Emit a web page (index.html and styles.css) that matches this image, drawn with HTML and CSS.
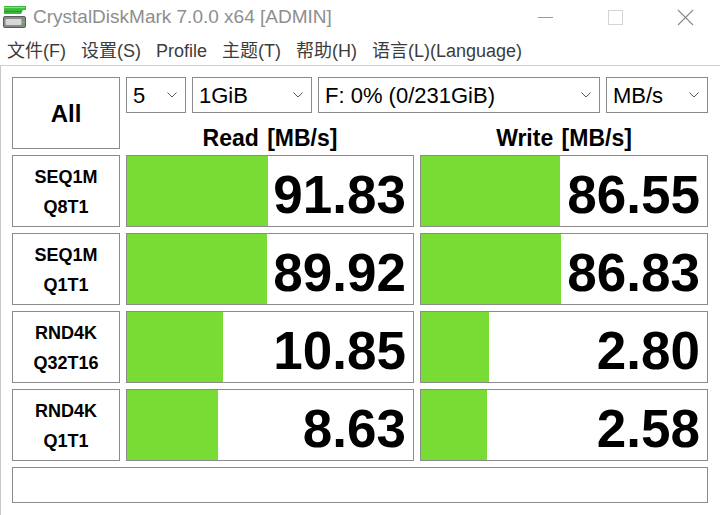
FILE: index.html
```html
<!DOCTYPE html>
<html lang="zh-CN">
<head>
<meta charset="utf-8">
<title>CrystalDiskMark 7.0.0 x64 [ADMIN]</title>
<link rel="stylesheet" href="styles.css">
</head>
<body>
<div class="window">
  <div class="titlebar">
    <svg class="app-icon" width="24" height="24" viewBox="0 0 24 24">
      <path d="M1 1 H23 V5 H20 L18 9 H1 Z" fill="#3cb83c"/>
      <rect x="1" y="2" width="21" height="1.2" fill="#7fe07f"/>
      <rect x="1" y="6" width="17" height="1" fill="#259a25"/>
      <rect x="0.5" y="11.5" width="22" height="11" rx="1.5" fill="#8a8a8a" stroke="#5a5a5a"/>
      <rect x="2.5" y="14" width="16" height="6" rx="1" fill="#d8d8d8"/>
      <rect x="19.5" y="16" width="2" height="2" fill="#4cd04c"/>
    </svg>
    <span class="title">CrystalDiskMark 7.0.0 x64 [ADMIN]</span>
    <div class="controls">
      <svg class="ctl" width="46" height="32" viewBox="0 0 46 32"><line x1="16" y1="16.5" x2="31" y2="16.5" stroke="#9a9a9a" stroke-width="1"/></svg>
      <svg class="ctl" width="46" height="32" viewBox="0 0 46 32"><rect x="16.5" y="9.5" width="14" height="14" fill="none" stroke="#d4d4d4" stroke-width="1"/></svg>
      <svg class="ctl" width="46" height="32" viewBox="0 0 46 32"><path d="M16 9 L31 24 M31 9 L16 24" stroke="#8a8a8a" stroke-width="1.1"/></svg>
    </div>
  </div>
  <div class="menubar">
    <span class="menu-item">文件(F)</span>
    <span class="menu-item">设置(S)</span>
    <span class="menu-item">Profile</span>
    <span class="menu-item">主题(T)</span>
    <span class="menu-item">帮助(H)</span>
    <span class="menu-item">语言(L)(Language)</span>
  </div>
  <div class="main">
    <div class="grid">
      <div class="all-btn">All</div>
      <div class="selects">
        <div class="select s-count"><span>5</span><svg class="chev" width="10" height="6" viewBox="0 0 10 6"><polyline points="0.5,0.5 5,5 9.5,0.5" fill="none" stroke="#555" stroke-width="1"/></svg></div>
        <div class="select s-size"><span>1GiB</span><svg class="chev" width="10" height="6" viewBox="0 0 10 6"><polyline points="0.5,0.5 5,5 9.5,0.5" fill="none" stroke="#555" stroke-width="1"/></svg></div>
        <div class="select s-drive"><span>F: 0% (0/231GiB)</span><svg class="chev" width="10" height="6" viewBox="0 0 10 6"><polyline points="0.5,0.5 5,5 9.5,0.5" fill="none" stroke="#555" stroke-width="1"/></svg></div>
        <div class="select s-unit"><span>MB/s</span><svg class="chev" width="10" height="6" viewBox="0 0 10 6"><polyline points="0.5,0.5 5,5 9.5,0.5" fill="none" stroke="#555" stroke-width="1"/></svg></div>
      </div>
      <div class="col-head">Read [MB/s]</div>
      <div class="col-head">Write [MB/s]</div>

      <div class="label">SEQ1M<br>Q8T1</div>
      <div class="value"><div class="bar" style="width:141px"></div><span class="num">91.83</span></div>
      <div class="value"><div class="bar" style="width:139px"></div><span class="num">86.55</span></div>

      <div class="label">SEQ1M<br>Q1T1</div>
      <div class="value"><div class="bar" style="width:140px"></div><span class="num">89.92</span></div>
      <div class="value"><div class="bar" style="width:140px"></div><span class="num">86.83</span></div>

      <div class="label">RND4K<br>Q32T16</div>
      <div class="value"><div class="bar" style="width:96px"></div><span class="num">10.85</span></div>
      <div class="value"><div class="bar" style="width:68px"></div><span class="num">2.80</span></div>

      <div class="label">RND4K<br>Q1T1</div>
      <div class="value"><div class="bar" style="width:91px"></div><span class="num">8.63</span></div>
      <div class="value"><div class="bar" style="width:66px"></div><span class="num">2.58</span></div>

      <div class="status"></div>
    </div>
  </div>
</div>
</body>
</html>
```

FILE: styles.css
```css
html, body {
  margin: 0;
  padding: 0;
  background: #ffffff;
}

body {
  width: 720px;
  height: 515px;
  overflow: hidden;
  font-family: "Liberation Sans", "Noto Sans CJK SC", sans-serif;
}

.window {
  width: 720px;
  height: 515px;
  display: flex;
  flex-direction: column;
}

.titlebar {
  height: 34px;
  display: flex;
  align-items: center;
  flex-shrink: 0;
}

.app-icon {
  margin-left: 3px;
  margin-top: -1px;
}

.title {
  margin-left: 6px;
  font-size: 19px;
  color: #8e8e8e;
  white-space: nowrap;
}

.controls {
  margin-left: auto;
  display: flex;
  gap: 24px;
  margin-right: 12px;
  margin-top: -1px;
}

.ctl {
  display: block;
}

.menubar {
  height: 31px;
  display: flex;
  align-items: center;
  gap: 15px;
  padding-left: 7px;
  border-bottom: 1px solid #d0d0d0;
  flex-shrink: 0;
  font-size: 18px;
  color: #3c3c3c;
}

.menu-item {
  white-space: nowrap;
  line-height: 1;
  padding-top: 2px;
}

.main {
  flex: 1;
  border-left: 1px solid #c8c8c8;
  padding: 11px 0 0 11px;
}

.grid {
  display: grid;
  grid-template-columns: 108px 288px 288px;
  grid-template-rows: 36px 36px 78px 78px 78px 78px 42px;
  column-gap: 6px;
}

.all-btn {
  grid-row: 1 / span 2;
  box-sizing: border-box;
  border: 1px solid #8c8c8c;
  display: flex;
  align-items: center;
  justify-content: center;
  font-weight: bold;
  font-size: 24px;
  color: #000;
  padding-top: 2px;
}

.selects {
  grid-column: 2 / span 2;
  display: flex;
  gap: 6px;
}

.select {
  box-sizing: border-box;
  height: 36px;
  border: 1px solid #8a8a8a;
  display: flex;
  align-items: center;
  padding: 2px 8px 0 6px;
  font-size: 22px;
  color: #000;
  white-space: nowrap;
}

.select .chev {
  margin-left: auto;
  margin-top: -2px;
}

.s-count { width: 60px; }
.s-size { width: 120px; }
.s-drive { width: 282px; }
.s-unit { width: 102px; }

.col-head {
  grid-row: 2;
  display: flex;
  align-items: center;
  justify-content: center;
  font-weight: bold;
  font-size: 23px;
  color: #000;
  word-spacing: 2px;
  padding-top: 14px;
  line-height: 1;
}

.label,
.value,
.status {
  margin-top: 6px;
}

.label {
  box-sizing: border-box;
  height: 72px;
  border: 1px solid #8c8c8c;
  display: flex;
  align-items: center;
  justify-content: center;
  text-align: center;
  font-weight: bold;
  font-size: 18px;
  line-height: 30px;
  color: #000;
  padding-top: 2px;
}

.value {
  position: relative;
  box-sizing: border-box;
  height: 72px;
  border: 1px solid #8c8c8c;
  display: flex;
  align-items: center;
  justify-content: flex-end;
  padding: 6px 7px 0 0;
  background: #fff;
}

.bar {
  position: absolute;
  left: 0;
  top: 0;
  bottom: 0;
  background: #78dc34;
}

.num {
  position: relative;
  font-weight: bold;
  font-size: 53px;
  line-height: 1;
  color: #000;
}

.status {
  grid-column: 1 / span 3;
  box-sizing: border-box;
  height: 36px;
  border: 1px solid #8c8c8c;
  background: #fff;
}
```
